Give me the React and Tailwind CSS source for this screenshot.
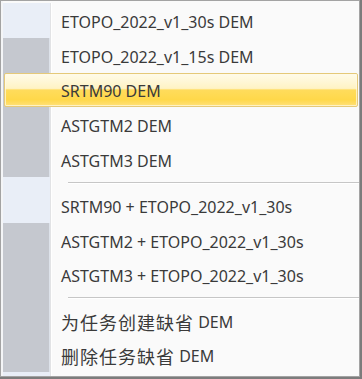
import React from "react";

const rows = [
  { t: "ETOPO_2022_v1_30s DEM", g: "b", h: 35 },
  { t: "ETOPO_2022_v1_15s DEM", g: "g", h: 35 },
  { t: "SRTM90 DEM", g: "g", h: 34, hl: true },
  { t: "ASTGTM2 DEM", g: "g", h: 35 },
  { t: "ASTGTM3 DEM", g: "g", h: 35 },
  { sep: true, g: "b" },
  { t: "SRTM90 + ETOPO_2022_v1_30s", g: "b", h: 34 },
  { t: "ASTGTM2 + ETOPO_2022_v1_30s", g: "g", h: 35 },
  { t: "ASTGTM3 + ETOPO_2022_v1_30s", g: "g", h: 34 },
  { sep: true, g: "g" },
  { cjk: "为任务创建缺省", t: " DEM", g: "g", h: 34 },
  { cjk: "删除任务缺省", t: " DEM", g: "g", h: 34 },
];

function Gutter({ g }) {
  return (
    <div className="flex h-full shrink-0">
      <div className="w-[2px] bg-[#f4f5f7]" />
      {g === "g" ? (
        <div className="flex w-[47px]">
          <div className="w-[46px] bg-[#c5c8cf]" />
          <div className="w-[1px] bg-[#dde2ea]" />
        </div>
      ) : (
        <div className="w-[47px] bg-[#e9eef7]" />
      )}
      <div className="w-[1px] bg-[#e2e3e5]" />
      <div className="w-[1px] bg-white" />
    </div>
  );
}

export default function App() {
  return (
    <div className="w-[362px] h-[379px] bg-[#7c7c7c] flex" style={{ fontFamily: '"Noto Sans", "Noto Sans CJK SC", sans-serif' }}>
      <div className="w-[360px] h-[377px] border border-[#a3a3a3] bg-[#fafafa] flex flex-col">
        <div className="h-[2px] flex">
          <div className="w-[2px] bg-[#f4f5f7]" />
        </div>
        {rows.map((r, i) =>
          r.sep ? (
            <div key={i} className="h-[12px] flex">
              <Gutter g={r.g} />
              <div className="flex-1 flex flex-col pt-[5px] pl-[16px]">
                <div className="h-[1px] bg-[#c6c6c6]" />
                <div className="h-[1px] bg-white" />
              </div>
            </div>
          ) : (
            <div key={i} className="relative flex" style={{ height: r.h }}>
              <Gutter g={r.g} />
              {r.hl && (
                <div className="absolute left-[3px] right-[1px] top-0 bottom-0 rounded-[2px] border border-[#e5c979] bg-[linear-gradient(to_bottom,#fffbe9_0%,#fff3c4_45%,#ffdc5c_50%,#ffd84a_80%,#ffe07a_100%)]">
                  <div className="h-full rounded-[1px] border border-[#fffae6]/70" />
                </div>
              )}
              <div className="relative flex items-center pl-[9px] pt-[2px] text-[16px] text-[#3a3a3a] whitespace-pre">
                {r.cjk && <span className="text-[18px] tracking-[1px]" style={{ fontFamily: '"Noto Sans CJK SC", sans-serif' }}>{r.cjk}</span>}
                <span>{r.t}</span>
              </div>
            </div>
          )
        )}
        <div className="flex-1 flex">
          <Gutter g="b" />
        </div>
      </div>
    </div>
  );
}
